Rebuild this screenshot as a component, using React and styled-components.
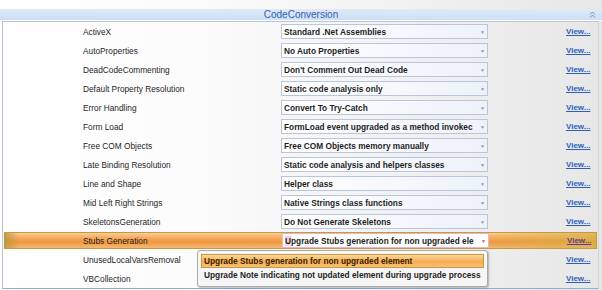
import React from 'react'
import styled, { createGlobalStyle } from 'styled-components'

const GlobalStyle = createGlobalStyle`
  html, body {
    margin: 0;
    padding: 0;
    background: #ffffff;
  }
  body {
    font-family: "Liberation Sans", Arial, sans-serif;
  }
`

const Page = styled.div`
  position: relative;
  width: 602px;
  height: 290px;
  overflow: hidden;
  background: linear-gradient(to right, #ffffff 0%, #fbfbfb 35%, #e7e7e8 100%);
`

const TopStrip = styled.div`
  height: 9px;
`

const Header = styled.div`
  height: 11px;
  display: grid;
  grid-template-columns: 1fr auto 1fr;
  align-items: center;
  background: linear-gradient(#dfeafa, #cddef4);
  border-bottom: 1px solid #ffffff;
`

const Title = styled.div`
  grid-column: 2;
  font-size: 10px;
  color: #2f62b0;
  line-height: 11px;
`

const Collapse = styled.div`
  grid-column: 3;
  justify-self: end;
  margin-right: 6px;
  display: flex;
  align-items: center;
`

const Body = styled.div`
  margin-left: 2px;
  margin-right: 3px;
  border-left: 1px solid #b7c3d4;
  border-right: 1px solid #d0d6de;
  border-top: 1px solid #b9c5d6;
  border-bottom: 1px solid #8eaed6;
`

const Row = styled.div`
  height: 19px;
  display: grid;
  grid-template-columns: 277px 207px 78px auto;
  align-items: center;
  margin: 0 1px;
  ${p => p.$active && `
    margin: 1px 1px;
    height: 15px;
    border: 1px solid #c99a3c;
    border-left-color: #b5953f;
    background:
      linear-gradient(to right, rgba(176,150,60,0.75) 0px, rgba(176,150,60,0) 14px,
        rgba(214,176,70,0) 80%, rgba(214,176,70,0.7) 100%),
      linear-gradient(#f9cc94 0%, #f3a04c 45%, #ef9841 60%, #f5b874 100%);
  `}
`

const Label = styled.div`
  padding-left: ${p => (p.$active ? '78px' : '79px')};
  font-size: 8.3px;
  color: #1f1f1f;
  white-space: nowrap;
`

const Select = styled.div`
  height: 13px;
  display: flex;
  align-items: center;
  border: 1px solid ${p => (p.$open ? '#e3b7cb' : '#b9c6da')};
  background: ${p => (p.$open ? '#ffffff' : 'linear-gradient(to right, #ffffff, #edf2fa)')};
  overflow: hidden;
`

const SelectText = styled.div`
  flex: 1;
  padding-left: 2px;
  font-size: 8.3px;
  font-weight: bold;
  color: #1e1e1e;
  white-space: nowrap;
  overflow: hidden;
`

const Caret = styled.span`
  width: 9px;
  font-size: 5px;
  color: ${p => (p.$open ? '#d0508a' : '#8a96a8')};
  text-align: center;
`

const Cursor = styled.span`
  background: #f6cfe0;
`

const ViewLink = styled.a`
  font-size: 8px;
  font-weight: bold;
  color: ${p => (p.$visited ? '#5b3f92' : '#2e5fbf')};
  text-decoration: underline;
  white-space: nowrap;
`

const Popup = styled.div`
  position: absolute;
  left: 197px;
  top: 250px;
  width: 291px;
  height: 37px;
  box-sizing: border-box;
  padding: 3px 3px 0;
  background: #f6f6f6;
  border: 1px solid #a9a9a9;
  border-radius: 3px;
  box-shadow: 1px 1px 2px rgba(0, 0, 0, 0.25);
`

const Option = styled.div`
  height: 12px;
  display: flex;
  align-items: center;
  padding-left: 2px;
  font-size: 8.3px;
  font-weight: bold;
  white-space: nowrap;
  color: ${p => (p.$selected ? '#3a2400' : '#1e1e1e')};
  border: 1px solid ${p => (p.$selected ? '#c89a40' : 'transparent')};
  background: ${p => (p.$selected ? 'linear-gradient(#fbd898, #f4ac52 55%, #f7c277)' : 'transparent')};
`

const rows = [
  ['ActiveX', 'Standard .Net Assemblies'],
  ['AutoProperties', 'No Auto Properties'],
  ['DeadCodeCommenting', "Don't Comment Out Dead Code"],
  ['Default Property Resolution', 'Static code analysis only'],
  ['Error Handling', 'Convert To Try-Catch'],
  ['Form Load', 'FormLoad event upgraded as a method invokec'],
  ['Free COM Objects', 'Free COM Objects memory manually'],
  ['Late Binding Resolution', 'Static code analysis and helpers classes'],
  ['Line and Shape', 'Helper class'],
  ['Mid Left Right Strings', 'Native Strings class functions'],
  ['SkeletonsGeneration', 'Do Not Generate Skeletons'],
  ['Stubs Generation', 'Upgrade Stubs generation for non upgraded ele', true],
  ['UnusedLocalVarsRemoval', null],
  ['VBCollection', null]
]

function App() {
  return (
    <Page>
      <GlobalStyle />
      <TopStrip />
      <Header>
        <Title>CodeConversion</Title>
        <Collapse>
          <svg width="7" height="7" viewBox="0 0 7 7">
            <path d="M1 3.5 L3.5 1 L6 3.5 M1 6.5 L3.5 4 L6 6.5" fill="none" stroke="#7d8ea8" strokeWidth="1" />
          </svg>
        </Collapse>
      </Header>
      <Body>
        {rows.map(([label, value, active]) => (
          <Row key={label} $active={active}>
            <Label $active={active}>{label}</Label>
            {value ? (
              <Select $open={active}>
                <SelectText>
                  {active ? (
                    <>
                      <Cursor>U</Cursor>
                      {value.slice(1)}
                    </>
                  ) : (
                    value
                  )}
                </SelectText>
                <Caret $open={active}>▼</Caret>
              </Select>
            ) : (
              <div />
            )}
            <div />
            <ViewLink href="#" $visited={active}>View...</ViewLink>
          </Row>
        ))}
      </Body>
      <Popup>
        <Option $selected>Upgrade Stubs generation for non upgraded element</Option>
        <Option>Upgrade Note indicating not updated element during upgrade process</Option>
      </Popup>
    </Page>
  )
}

export default App
